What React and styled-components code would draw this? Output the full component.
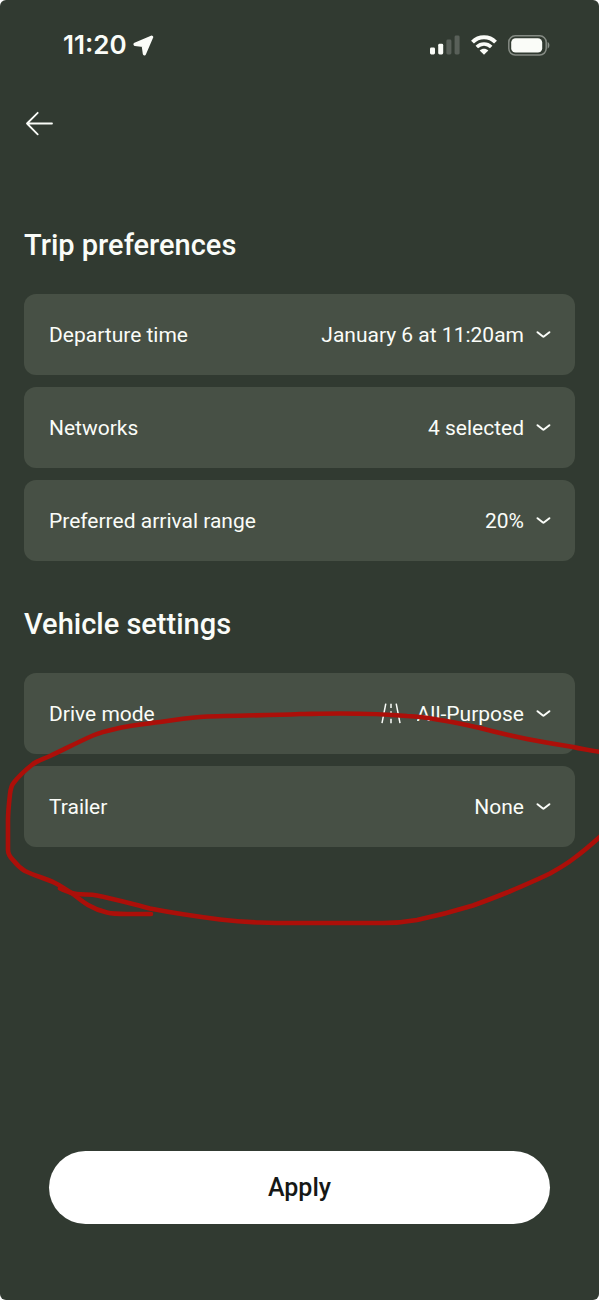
import React from "react";
import styled, { createGlobalStyle } from "styled-components";

const GlobalStyle = createGlobalStyle`
  * {
    box-sizing: border-box;
  }
  body {
    margin: 0;
    background: #ffffff;
    font-family: Roboto, "Liberation Sans", sans-serif;
    color: #fafcf8;
  }
`;

const Screen = styled.div`
  display: flex;
  flex-direction: column;
  min-height: 100vh;
  overflow: hidden;
  border-radius: 6px;
  background: #313a31;
`;

const StatusBar = styled.div`
  display: flex;
  align-items: center;
  justify-content: space-between;
  height: 90px;
  padding: 0 49px 0 63px;
`;

const StatusGroup = styled.div`
  display: flex;
  align-items: center;
  gap: ${(p) => p.$gap}px;
`;

const Clock = styled.time`
  font-family: Inter, "Liberation Sans", sans-serif;
  font-size: 26px;
  line-height: 32px;
  font-weight: 600;
`;

const TopNav = styled.nav`
  display: flex;
  padding: 14px 24px 0;
`;

const BackButton = styled.button`
  display: flex;
  align-items: center;
  height: 40px;
  padding: 0;
  border: 0;
  background: none;
  color: inherit;
  cursor: pointer;
`;

const Content = styled.main`
  flex: 1;
  display: flex;
  flex-direction: column;
  gap: 45px;
  padding: 83px 24px 48px;
`;

const Section = styled.section`
  display: flex;
  flex-direction: column;
  gap: 31px;
`;

const SectionTitle = styled.h2`
  margin: 0;
  font-size: 29px;
  line-height: 36px;
  font-weight: 500;
`;

const SettingList = styled.div`
  position: relative;
  display: flex;
  flex-direction: column;
  gap: 12px;
`;

const SettingRow = styled.div`
  display: flex;
  align-items: center;
  height: 81px;
  padding: 0 24px 0 25px;
  border-radius: 12px;
  background: #475045;
  font-size: 21px;
  line-height: 28px;
`;

const SettingLabel = styled.label`
  flex: 1;
`;

const SettingSelect = styled.select`
  appearance: none;
  field-sizing: content;
  margin: 0 12px 0 16px;
  padding: 0;
  border: 0;
  background: transparent;
  color: inherit;
  font: inherit;
  text-align: right;
  cursor: pointer;

  option {
    color: #1b1e1a;
  }
`;

const Markup = styled.svg`
  position: absolute;
  top: 0;
  left: -24px;
  width: calc(100% + 48px);
  height: 260px;
  pointer-events: none;
`;

const Footer = styled.footer`
  display: flex;
  padding: 0 49px 76px;
`;

const ApplyButton = styled.button`
  flex: 1;
  height: 73px;
  border: 0;
  border-radius: 37px;
  background: #ffffff;
  color: #161816;
  font-family: inherit;
  font-size: 25px;
  line-height: 32px;
  font-weight: 500;
  cursor: pointer;
`;

const LocationIcon = () => (
  <svg width="21" height="21" viewBox="0 0 21 21" aria-hidden="true">
    <path
      d="M18.6 2.1 2.1 9.3 10.2 10.4 11.4 18.9Z"
      fill="currentColor"
      stroke="currentColor"
      strokeWidth="3.2"
      strokeLinejoin="round"
    />
  </svg>
);

const SignalIcon = () => (
  <svg width="30" height="20" viewBox="0 0 30 20" fill="currentColor" aria-hidden="true">
    <rect x="0" y="12.4" width="5" height="7.1" rx="1.4" />
    <rect x="8.2" y="8.8" width="5" height="10.7" rx="1.4" />
    <rect x="16.4" y="4.6" width="5" height="14.9" rx="1.4" opacity="0.2" />
    <rect x="24.6" y="0.6" width="5" height="18.9" rx="1.4" opacity="0.2" />
  </svg>
);

const WifiIcon = () => (
  <svg width="26" height="20" viewBox="0 0 26 20" aria-hidden="true">
    <g fill="none" stroke="currentColor">
      <path d="M1.500 7.200C7.800 .7 18.200 .7 24.500 7.200" strokeWidth="4" />
      <path d="M5.800 12C10 8 16 8 20.200 12" strokeWidth="3.6" />
    </g>
    <path
      d="M13 19.800 8.700 15.500C11.200 13 14.800 13 17.300 15.500Z"
      fill="currentColor"
    />
  </svg>
);

const BatteryIcon = () => (
  <svg width="42" height="21" viewBox="0 0 42 21" aria-hidden="true">
    <rect
      x="0.8"
      y="0.8"
      width="37.4"
      height="19.2"
      rx="6.4"
      fill="none"
      stroke="currentColor"
      strokeWidth="1.5"
      opacity="0.42"
    />
    <rect x="3.2" y="3.2" width="31" height="14.400" rx="4.4" fill="currentColor" />
    <path d="M39.6 7.1C42 8 42 12.8 39.6 13.7Z" fill="currentColor" opacity="0.45" />
  </svg>
);

const BackIcon = () => (
  <svg
    width="30"
    height="26"
    viewBox="0 0 30 26"
    fill="none"
    stroke="currentColor"
    strokeWidth="1.8"
    strokeLinecap="round"
    strokeLinejoin="round"
    aria-hidden="true"
  >
    <path d="M28 12.5H3M13.7 1.8 3 12.5 13.7 23.4" />
  </svg>
);

const ChevronIcon = () => (
  <svg
    width="15"
    height="10"
    viewBox="0 0 15 10"
    fill="none"
    stroke="currentColor"
    strokeWidth="2"
    strokeLinecap="round"
    strokeLinejoin="round"
    aria-hidden="true"
  >
    <path d="M1.5 2.2 6.6 6.3Q7.4 6.9 8.2 6.3L13.4 2.2" />
  </svg>
);

const RoadIcon = () => (
  <svg
    width="20"
    height="21"
    viewBox="0 0 20 21"
    fill="none"
    stroke="currentColor"
    strokeWidth="1.5"
    aria-hidden="true"
  >
    <path d="M4.8.7 1 20.2M15.2.7 19 20.2M10 .7V5M10 8.2V12.4M10 15.8V20.2" />
  </svg>
);

const TRIP_SETTINGS = [
  {
    id: "departure",
    label: "Departure time",
    value: "January 6 at 11:20am",
    options: ["January 6 at 11:20am", "January 6 at 12:00pm"],
  },
  {
    id: "networks",
    label: "Networks",
    value: "4 selected",
    options: ["3 selected", "4 selected"],
  },
  {
    id: "arrival",
    label: "Preferred arrival range",
    value: "20%",
    options: ["10%", "20%", "30%"],
  },
];

const VEHICLE_SETTINGS = [
  {
    id: "drive-mode",
    label: "Drive mode",
    value: "All-Purpose",
    options: ["All-Purpose", "Sport"],
    icon: <RoadIcon />,
  },
  { id: "trailer", label: "Trailer", value: "None", options: ["None"] },
];

const Setting = ({ id, label, value, options, icon }) => (
  <SettingRow>
    <SettingLabel htmlFor={id}>{label}</SettingLabel>
    {icon}
    <SettingSelect id={id} defaultValue={value}>
      {options.map((option) => (
        <option key={option}>{option}</option>
      ))}
    </SettingSelect>
    <ChevronIcon />
  </SettingRow>
);

const TrailerMarkup = () => (
  <Markup
    viewBox="0 673 599 260"
    preserveAspectRatio="none"
    fill="none"
    stroke="#ac0f09"
    strokeWidth="4.6"
    strokeLinecap="round"
    strokeLinejoin="round"
    aria-hidden="true"
  >
    <path d="M604 752.500C594 751 584 749.500 573 747C557 744.500 543 742 527 739C510 735.500 495 732 480 728C467 725 454 722 440 720C429 718 418 716.500 407 716C385 714 362 713.500 340 713.500C320 713.500 308 714 300 714C260 716 225 715 200 717C186 718 173 720 160 722C145 724 131 725 117 728.500C108 730.500 101 732 93 735.500C78 742 65 749 50 756C44 759 38 760.500 33 764C26 769.500 18 777 13.500 783C11 786 10.500 790 10 794C9 803 8 812 8 820V850C8 854 10 857 13 860C17 865 20 868 25 871C35 876 45 878 55 883C61 886 67 890 73 894C78 898 83 902 88 905C94 908.500 100 911 107 912.500C113 914 120 914 127 914H151" />
    <path d="M60 888.500C66 891 71 893.500 77 894C84 895 90 894 97 895.500C115 899 132 904 150 908.500C173 913 197 916.500 220 919.500C233 921 247 922 260 922.500C273 923 287 923 300 923H383C395 923 406 922 417 920C436 916 455 911 473 905.500C484 901.500 496 897 507 892.500C522 886 536 880.500 550 873.500C558 869 566 864.500 573 859C582 852.500 591 845 603 834" />
  </Markup>
);

export default function App() {
  return (
    <>
      <GlobalStyle />
      <Screen>
        <StatusBar>
          <StatusGroup $gap={6}>
            <Clock>11:20</Clock>
            <LocationIcon />
          </StatusGroup>
          <StatusGroup $gap={11}>
            <SignalIcon />
            <WifiIcon />
            <BatteryIcon />
          </StatusGroup>
        </StatusBar>
        <TopNav>
          <BackButton type="button" aria-label="Back">
            <BackIcon />
          </BackButton>
        </TopNav>
        <Content>
          <Section>
            <SectionTitle>Trip preferences</SectionTitle>
            <SettingList>
              {TRIP_SETTINGS.map((setting) => (
                <Setting key={setting.id} {...setting} />
              ))}
            </SettingList>
          </Section>
          <Section>
            <SectionTitle>Vehicle settings</SectionTitle>
            <SettingList>
              {VEHICLE_SETTINGS.map((setting) => (
                <Setting key={setting.id} {...setting} />
              ))}
              <TrailerMarkup />
            </SettingList>
          </Section>
        </Content>
        <Footer>
          <ApplyButton type="button">Apply</ApplyButton>
        </Footer>
      </Screen>
    </>
  );
}
